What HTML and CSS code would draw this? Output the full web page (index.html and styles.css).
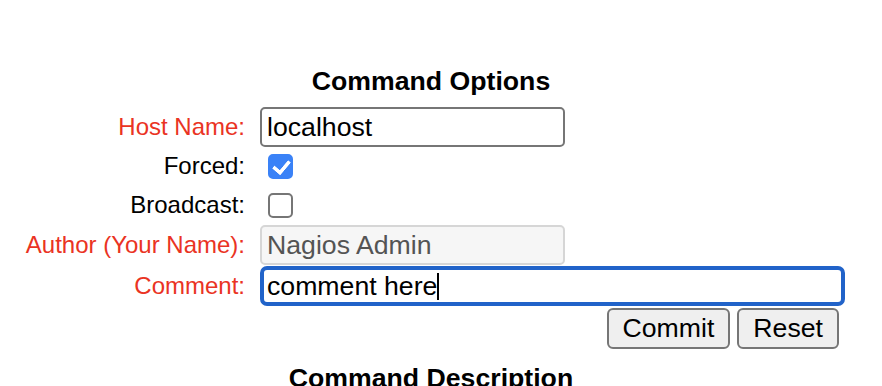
FILE: index.html
```html
<!DOCTYPE html>
<html lang="en">
<head>
  <meta charset="UTF-8">
  <title>Command Options</title>
  <link rel="stylesheet" href="styles.css">
</head>
<body>
  <div class="cmd">
    <h2 class="title">Command Options</h2>

    <form class="opts">
      <label class="req" for="host">Host Name:</label>
      <input id="host" class="txt" type="text" value="localhost">

      <label for="forced">Forced:</label>
      <span class="cell"><input id="forced" class="chk" type="checkbox" checked></span>

      <label for="bcast">Broadcast:</label>
      <span class="cell"><input id="bcast" class="chk" type="checkbox"></span>

      <label class="req" for="author">Author (Your Name):</label>
      <input id="author" class="txt ro" type="text" value="Nagios Admin" readonly>

      <label class="req">Comment:</label>
      <div class="txt wide focus" role="textbox">comment here<span class="caret"></span></div>

      <div class="btns">
        <button type="button">Commit</button>
        <button type="reset">Reset</button>
      </div>
    </form>

    <h2 class="title desc">Command Description</h2>
  </div>
</body>
</html>
```

FILE: styles.css
```css
body {
  margin: 0;
  font-family: "Liberation Sans", Arial, Helvetica, sans-serif;
  background-color: #fff;
  color: #000;
}

.cmd {
  width: 828px;
  margin-left: 17px;
  padding-top: 66px;
}

.title {
  margin: 0;
  font-size: 26.67px;
  line-height: 30px;
  font-weight: bold;
  text-align: center;
}

.title.desc {
  margin-top: 14px;
}

.opts {
  display: grid;
  grid-template-columns: 228px 585px;
  grid-template-rows: 40px 38px 40px 40px 42px 42px;
  column-gap: 15px;
  align-items: center;
  margin: 11px 0 0 0;
}

.opts label {
  font-size: 24px;
  text-align: right;
}

.opts label.req {
  color: #ea3323;
}

.txt {
  box-sizing: border-box;
  height: 40px;
  width: 305px;
  padding: 0 5px;
  font-family: inherit;
  font-size: 26.67px;
  color: #000;
  background-color: #fff;
  border: 2px solid #767676;
  border-radius: 5px;
  outline: none;
}

.txt.ro {
  color: #545454;
  background-color: #f6f6f6;
  border-color: #d6d6d6;
}

.txt.wide {
  width: 585px;
  display: flex;
  align-items: center;
  padding: 0 3px;
  border: 4px solid #2163c9;
  border-radius: 7px;
  white-space: pre;
}

.caret {
  display: inline-block;
  width: 2px;
  height: 27px;
  background-color: #000;
}

.cell {
  display: flex;
  align-items: center;
}

.chk {
  appearance: none;
  -webkit-appearance: none;
  position: relative;
  box-sizing: border-box;
  width: 25px;
  height: 25px;
  margin: 0 0 0 8px;
  border: 2px solid #767676;
  border-radius: 5px;
  background-color: #fff;
}

.chk:checked {
  background-color: #3a82f7;
  border-color: #3a82f7;
}

.chk:checked::after {
  content: "";
  position: absolute;
  left: 6px;
  top: 1px;
  width: 7px;
  height: 13px;
  border: solid #fff;
  border-width: 0 4px 4px 0;
  border-radius: 1px;
  transform: rotate(40deg);
}

.btns {
  grid-column: 2;
  display: flex;
  justify-content: flex-end;
  gap: 7px;
  padding-right: 6px;
}

.btns button {
  box-sizing: border-box;
  height: 41px;
  padding: 0 14px;
  font-family: inherit;
  font-size: 26.67px;
  color: #000;
  background-color: #efefef;
  border: 2px solid #767676;
  border-radius: 6px;
}
```
